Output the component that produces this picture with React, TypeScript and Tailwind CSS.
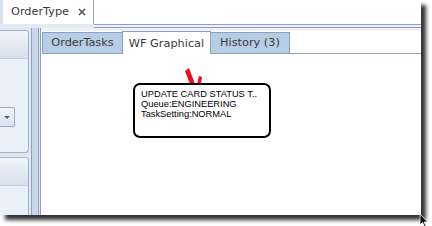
import React from 'react';

const tabFont = { fontFamily: '"DejaVu Sans", Verdana, sans-serif' };

function LeftPanel() {
  return (
    <div className="flex w-[29px] shrink-0 flex-col bg-[#dde6f1] pt-[2px]">
      {/* first accordion panel */}
      <div className="flex h-[123px] flex-col overflow-hidden rounded-r-[4px] border-y border-r border-[#a2b2c8] bg-[#eaf0f9]">
        <div className="h-[28px] shrink-0 border-b border-[#c3cfdf] bg-gradient-to-b from-[#f1f4f9] to-[#d6e0ee]" />
        <div className="mt-[48px] flex h-[20px] w-[15px] items-center justify-center rounded-r-[2px] border-y border-r border-[#9eabbd] bg-gradient-to-b from-[#f3f6fa] to-[#d9e2ee]">
          <div className="h-0 w-0 border-x-[3px] border-t-[3px] border-x-transparent border-t-[#4f5d70]" />
        </div>
      </div>
      <div className="h-[4px] shrink-0" />
      {/* second accordion panel */}
      <div className="flex flex-1 flex-col overflow-hidden rounded-tr-[4px] border-t border-r border-[#a2b2c8] bg-[#eaf0f9]">
        <div className="h-[28px] shrink-0 border-b border-[#c3cfdf] bg-gradient-to-b from-[#f1f4f9] to-[#d6e0ee]" />
      </div>
    </div>
  );
}

function Splitter() {
  return (
    <div className="flex w-[11px] shrink-0 bg-[#e2e9f3] pl-[2px] pr-[1px]">
      <div className="w-[8px] border-x border-[#8da0bb] bg-[#c9d7ea]" />
    </div>
  );
}

function WorkflowCanvas() {
  return (
    <div className="relative flex-1 bg-white">
      {/* incoming connector arrow, mostly hidden by the node */}
      <svg className="absolute left-[143px] top-[13px]" width="20" height="18" viewBox="0 0 20 18">
        <polygon points="1,4 5,1 11,17 6,17" fill="#e8101a" />
        <polygon points="15,9 18,10 17,17 13,17" fill="#e8101a" />
      </svg>
      <div
        className="absolute left-[92px] top-[29px] h-[55px] w-[138px] rounded-[7px] border-[2.5px] border-black bg-white pl-[6px] pt-[4px] text-[9.3px] leading-[10px] text-black"
        style={{ fontFamily: '"Liberation Sans", Arial, sans-serif' }}
      >
        <div>UPDATE CARD STATUS T..</div>
        <div>Queue:ENGINEERING</div>
        <div>TaskSetting:NORMAL</div>
      </div>
    </div>
  );
}

function RightPanel() {
  return (
    <div className="flex flex-1 flex-col border-l border-[#8da0bb] bg-white">
      <div className="h-[3px] shrink-0 bg-[#eef2f8]" />
      <div className="flex h-[23px] shrink-0 pl-[1px] text-[11.3px] text-[#3a3a3a]" style={tabFont}>
        <div className="mt-auto flex h-[22px] w-[80px] items-center justify-center border-y border-l border-[#8da0bb] bg-[#b8cce5]">
          OrderTasks
        </div>
        <div className="flex h-[23px] w-[89px] items-center justify-center border-x border-t border-[#8da0bb] bg-white pt-[2px]">
          WF Graphical
        </div>
        <div className="mt-auto flex h-[22px] w-[79px] items-center justify-center border-y border-r border-[#8da0bb] bg-[#b8cce5]">
          History (3)
        </div>
        <div className="flex-1 border-b border-[#8da0bb]" />
      </div>
      <WorkflowCanvas />
    </div>
  );
}

export default function App() {
  return (
    <div className="relative h-[226px] w-[432px] overflow-hidden bg-white">
      <div className="flex h-[215px] w-[421px] flex-col bg-white shadow-[5px_5px_4px_rgba(0,0,0,0.8)]">
        {/* document tabs */}
        <div className="flex h-[24px] shrink-0">
          <div className="w-[3px] bg-[#d9e3f0]" />
          <div
            className="flex w-[91px] items-center border-r border-[#8da0bb] bg-white pl-[8px] text-[11.3px] text-[#3a3a3a]"
            style={tabFont}
          >
            <span>OrderType</span>
            <svg className="ml-[9px]" width="8" height="8" viewBox="0 0 8 8">
              <path d="M1 1 L7 7 M7 1 L1 7" stroke="#555" strokeWidth="1.6" />
            </svg>
          </div>
          <div className="flex-1 bg-white" />
        </div>
        <div className="flex h-[4px] shrink-0">
          <div className="w-[94px] bg-[#e3eaf4]" />
          <div className="flex-1 border-y border-[#8da0bb] bg-[#eef2f8]" />
        </div>
        <div className="flex min-h-0 flex-1">
          <LeftPanel />
          <Splitter />
          <RightPanel />
        </div>
      </div>
      {/* mouse pointer */}
      <svg className="absolute left-[419px] top-[213px]" width="11" height="14" viewBox="0 0 11 14">
        <path d="M1 1 L1 12 L3.5 9.5 L5.5 13.5 L7 12.8 L5 9 L8.5 9 Z" fill="#000" stroke="#fff" strokeWidth="0.8" />
      </svg>
    </div>
  );
}
